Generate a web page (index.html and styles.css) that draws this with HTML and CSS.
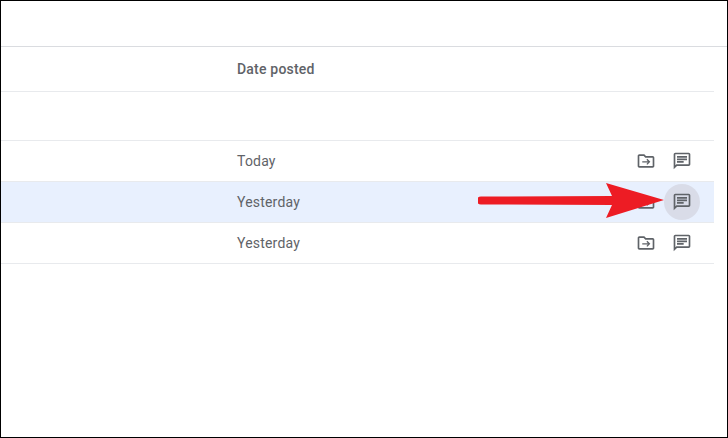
FILE: index.html
```html
<!DOCTYPE html>
<html lang="en">
<head>
  <meta charset="UTF-8">
  <title>Date posted</title>
  <link rel="stylesheet" href="styles.css">
</head>
<body>

<div class="frame">
  <div class="top-bar"></div>

  <div class="table">
    <div class="row row-head">
      <div class="date">Date posted</div>
    </div>
    <div class="row row-blank"></div>

    <div class="row">
      <div class="date">Today</div>
      <div class="actions">
        <span class="action">
          <svg class="icon" viewBox="0 0 24 24"><use href="#folder-move"/></svg>
        </span>
        <span class="action">
          <svg class="icon" viewBox="0 0 24 24"><use href="#comment"/></svg>
        </span>
      </div>
    </div>

    <div class="row row-active">
      <div class="date">Yesterday</div>
      <div class="actions">
        <span class="action">
          <svg class="icon" viewBox="0 0 24 24"><use href="#folder-move"/></svg>
        </span>
        <span class="action action-hover">
          <svg class="icon" viewBox="0 0 24 24"><use href="#comment"/></svg>
        </span>
      </div>
    </div>

    <div class="row">
      <div class="date">Yesterday</div>
      <div class="actions">
        <span class="action">
          <svg class="icon" viewBox="0 0 24 24"><use href="#folder-move"/></svg>
        </span>
        <span class="action">
          <svg class="icon" viewBox="0 0 24 24"><use href="#comment"/></svg>
        </span>
      </div>
    </div>
  </div>

  <!-- red arrow drawn over the screenshot -->
  <svg class="arrow" width="200" height="40" viewBox="0 0 200 40">
    <path d="M3 13.5 L134 13 L128 0 L186 17 L128 35 L134 22 L3 21.5 A4 4 0 0 1 3 13.5 Z" fill="#ed1c24"/>
  </svg>
</div>

<svg class="defs" width="0" height="0">
  <defs>
    <g id="comment">
      <path d="M20 2H4c-1.1 0-2 .9-2 2v18l4-4h14c1.1 0 2-.9 2-2V4c0-1.1-.9-2-2-2zm0 14H5.2L4 17.2V4h16v12z"/>
      <path d="M6 12h8v2H6zm0-3h12v2H6zm0-3h12v2H6z"/>
    </g>
    <g id="folder-move">
      <path d="M20 6h-8l-2-2H4c-1.1 0-1.99.9-1.99 2L2 18c0 1.1.9 2 2 2h16c1.1 0 2-.9 2-2V8c0-1.1-.9-2-2-2zm0 12H4V6h5.17l2 2H20v10z"/>
      <path d="M12.5 10.5 14.2 12.2H7.5v1.6h6.7l-1.7 1.7 1.1 1.1L17.2 13l-3.6-3.6z"/>
    </g>
  </defs>
</svg>

</body>
</html>
```

FILE: styles.css
```css
html, body {
  margin: 0;
  padding: 0;
}

body {
  font-family: 'Roboto', 'Liberation Sans', sans-serif;
  background-color: #fff;
}

.frame {
  position: relative;
  box-sizing: border-box;
  width: 728px;
  height: 438px;
  border: 1px solid #000;
  overflow: hidden;
}

.top-bar {
  height: 45px;
  border-bottom: 1px solid #dadce0;
}

.table {
  margin-right: 13px;
}

.row {
  box-sizing: border-box;
  display: flex;
  align-items: center;
  height: 41px;
  padding-left: 236px;
  padding-right: 14px;
  border-bottom: 1px solid #e8eaed;
}

.row-head {
  height: 45px;
}

.row-blank {
  height: 49px;
}

.row-active {
  background-color: #e8f0fe;
}

.date {
  font-size: 14px;
  letter-spacing: 0.2px;
  color: #5f6368;
}

.row-head .date {
  font-weight: 500;
}

.actions {
  display: flex;
  gap: 0;
  margin-left: auto;
}

.action {
  display: flex;
  align-items: center;
  justify-content: center;
  width: 36px;
  height: 36px;
  border-radius: 50%;
}

.action-hover {
  background-color: #d9dce8;
}

.icon {
  width: 20px;
  height: 20px;
  fill: #5f6368;
}

.arrow {
  position: absolute;
  left: 477px;
  top: 182px;
}

.defs {
  position: absolute;
}
```
